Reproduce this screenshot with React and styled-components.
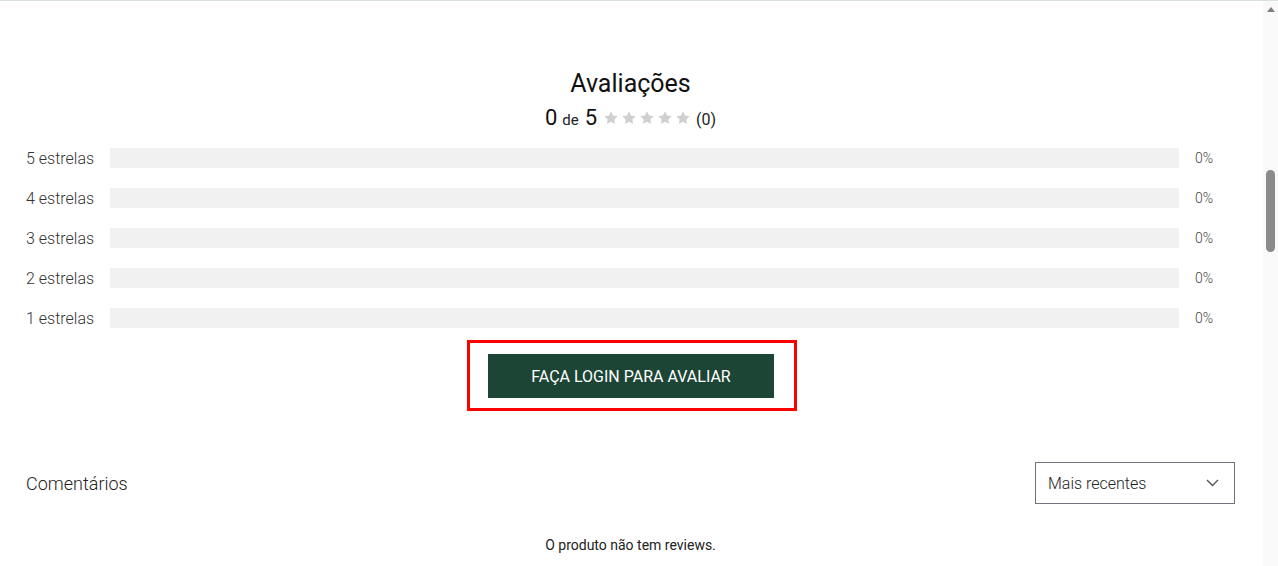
import React from "react";
import styled, { createGlobalStyle } from "styled-components";

const GlobalStyle = createGlobalStyle`
  html, body {
    margin: 0;
    padding: 0;
    background: #fff;
  }
  body {
    font-family: Roboto, "Liberation Sans", Arial, sans-serif;
    color: #111;
  }
`;

const rows = [
  { label: "5 estrelas", pct: 0 },
  { label: "4 estrelas", pct: 0 },
  { label: "3 estrelas", pct: 0 },
  { label: "2 estrelas", pct: 0 },
  { label: "1 estrelas", pct: 0 },
];

const Star = ({ color }) => (
  <svg width="16" height="16" viewBox="0 0 24 24">
    <path
      fill={color}
      d="M12 2l3.09 6.26L22 9.27l-5 4.87 1.18 6.88L12 17.77l-6.18 3.25L7 14.14 2 9.27l6.91-1.01L12 2z"
    />
  </svg>
);

const App = () => {
  return (
    <Page>
      <GlobalStyle />
      <Main>
        <Title>Avaliações</Title>
        <Rating>
          <Big>0</Big>
          <Small>de</Small>
          <Big>5</Big>
          <Stars>
            {[0, 1, 2, 3, 4].map((i) => (
              <Star key={i} color="#d0d0d0" />
            ))}
          </Stars>
          <Count>(0)</Count>
        </Rating>

        <Bars>
          {rows.map((r) => (
            <Row key={r.label}>
              <Label>{r.label}</Label>
              <Track>
                <Fill style={{ width: `${r.pct}%` }} />
              </Track>
              <Pct>{r.pct}%</Pct>
            </Row>
          ))}
        </Bars>

        <Highlight>
          <LoginButton>FAÇA LOGIN PARA AVALIAR</LoginButton>
        </Highlight>

        <CommentsHeader>
          <CommentsTitle>Comentários</CommentsTitle>
          <Select>
            <span>Mais recentes</span>
            <svg width="13" height="8" viewBox="0 0 13 8">
              <path d="M1 1l5.5 5.5L12 1" fill="none" stroke="#555" strokeWidth="1.4" />
            </svg>
          </Select>
        </CommentsHeader>

        <Empty>O produto não tem reviews.</Empty>
      </Main>
      <ScrollBar>
        <Arrow />
        <Thumb />
      </ScrollBar>
    </Page>
  );
};

const Page = styled.div`
  display: flex;
  height: 566px;
  overflow: hidden;
  border-top: 1px solid #d8e1dd;
  box-sizing: border-box;
`;

const Main = styled.div`
  flex: 1;
  display: flex;
  flex-direction: column;
  align-items: center;
  padding: 68px 28px 0 26px;
`;

const Title = styled.h2`
  margin: 0;
  font-size: 25px;
  line-height: 30px;
  font-weight: 400;
  color: #111;
`;

const Rating = styled.div`
  display: flex;
  align-items: baseline;
  margin-top: 6px;
  height: 26px;
  line-height: 26px;
`;

const Big = styled.span`
  font-size: 22px;
  color: #111;
`;

const Small = styled.span`
  font-size: 15px;
  margin: 0 6px 0 5px;
  color: #222;
`;

const Stars = styled.span`
  display: flex;
  gap: 2px;
  align-self: center;
  margin: 0 5px 0 6px;
`;

const Count = styled.span`
  font-size: 16px;
  color: #222;
`;

const Bars = styled.div`
  width: 100%;
  display: flex;
  flex-direction: column;
  gap: 20px;
  margin-top: 17px;
`;

const Row = styled.div`
  display: flex;
  align-items: center;
  height: 20px;
`;

const Label = styled.div`
  width: 84px;
  font-size: 16px;
  font-weight: 300;
  color: #333;
  white-space: nowrap;
`;

const Track = styled.div`
  flex: 1;
  height: 20px;
  background: #f1f1f1;
`;

const Fill = styled.div`
  height: 100%;
  background: #1c4535;
`;

const Pct = styled.div`
  width: 40px;
  padding-left: 16px;
  font-size: 14px;
  font-weight: 300;
  color: #444;
`;

const Highlight = styled.div`
  margin: 12px 0 0 3px;
  border: 3px solid #ff0000;
  padding: 11px 20px 10px 18px;
`;

const LoginButton = styled.button`
  display: block;
  width: 286px;
  height: 44px;
  border: 0;
  border-radius: 0;
  background: #1c4535;
  color: #fff;
  font-family: Roboto, "Liberation Sans", Arial, sans-serif;
  font-size: 16px;
  font-weight: 400;
  cursor: pointer;
`;

const CommentsHeader = styled.div`
  width: 100%;
  display: flex;
  align-items: center;
  justify-content: space-between;
  margin-top: 51px;
`;

const CommentsTitle = styled.h3`
  margin: 0;
  font-size: 18px;
  font-weight: 300;
  color: #222;
`;

const Select = styled.div`
  width: 200px;
  height: 42px;
  box-sizing: border-box;
  border: 1px solid #6f737b;
  display: flex;
  align-items: center;
  justify-content: space-between;
  padding: 0 15px 0 12px;
  font-size: 16px;
  font-weight: 300;
  color: #222;
`;

const Empty = styled.p`
  margin: 31px 0 0;
  font-size: 14px;
  line-height: 20px;
  color: #222;
`;

const ScrollBar = styled.div`
  width: 15px;
  background: #f9f9f9;
  display: flex;
  flex-direction: column;
  align-items: center;
`;

const Arrow = styled.div`
  margin-top: 6px;
  width: 0;
  height: 0;
  border-left: 4.5px solid transparent;
  border-right: 4.5px solid transparent;
  border-bottom: 5px solid #7f7f7f;
`;

const Thumb = styled.div`
  margin-top: 158px;
  width: 9px;
  height: 82px;
  border-radius: 5px;
  background: #8a8a8a;
`;

export default App;
